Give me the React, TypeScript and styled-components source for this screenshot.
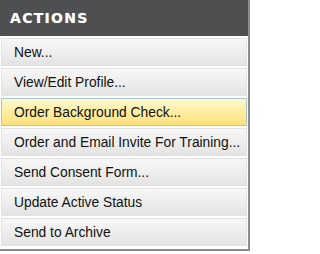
import React from "react";
import styled, { createGlobalStyle } from "styled-components";

const GlobalStyle = createGlobalStyle`
  html, body {
    margin: 0;
    padding: 0;
    background: #ffffff;
  }
`;

const actions = [
  "New...",
  "View/Edit Profile...",
  "Order Background Check...",
  "Order and Email Invite For Training...",
  "Send Consent Form...",
  "Update Active Status",
  "Send to Archive",
];

const App: React.FC = () => {
  return (
    <>
      <GlobalStyle />
      <Panel>
        <Header>ACTIONS</Header>
        <ActionList>
          {actions.map((label, i) => (
            <ActionItem key={label} $active={i === 2}>
              {label}
            </ActionItem>
          ))}
        </ActionList>
      </Panel>
    </>
  );
};

export default App;

const Panel = styled.div`
  width: 248px;
  border-right: 2px solid #8c8c8c;
  border-bottom: 2px solid #8c8c8c;
  background: #ffffff;
`;

const Header = styled.div`
  height: 36px;
  background: #4e4f51;
  color: #ffffff;
  font-family: "DejaVu Sans", Verdana, sans-serif;
  font-weight: bold;
  font-size: 14px;
  letter-spacing: 1.3px;
  line-height: 36px;
  padding-left: 10px;
  text-shadow: 0 0 1px rgba(255, 255, 255, 0.5);
`;

const ActionList = styled.div`
  display: flex;
  flex-direction: column;
  gap: 2px;
  padding: 2px 1px 3px 1px;
`;

const ActionItem = styled.div<{ $active?: boolean }>`
  box-sizing: border-box;
  height: 28px;
  display: flex;
  align-items: center;
  padding-left: 12px;
  font-family: "Liberation Sans", Arial, sans-serif;
  font-size: 13.8px;
  color: #111111;
  white-space: nowrap;
  border: 1px solid ${(p) => (p.$active ? "#a3c6cf" : "#e2e2e2")};
  background: ${(p) =>
    p.$active
      ? "linear-gradient(to bottom, #fff9cf 0%, #feec9e 55%, #fde07a 100%)"
      : "linear-gradient(to bottom, #f7f7f7 0%, #ececec 60%, #e3e3e3 100%)"};
  cursor: pointer;
`;
